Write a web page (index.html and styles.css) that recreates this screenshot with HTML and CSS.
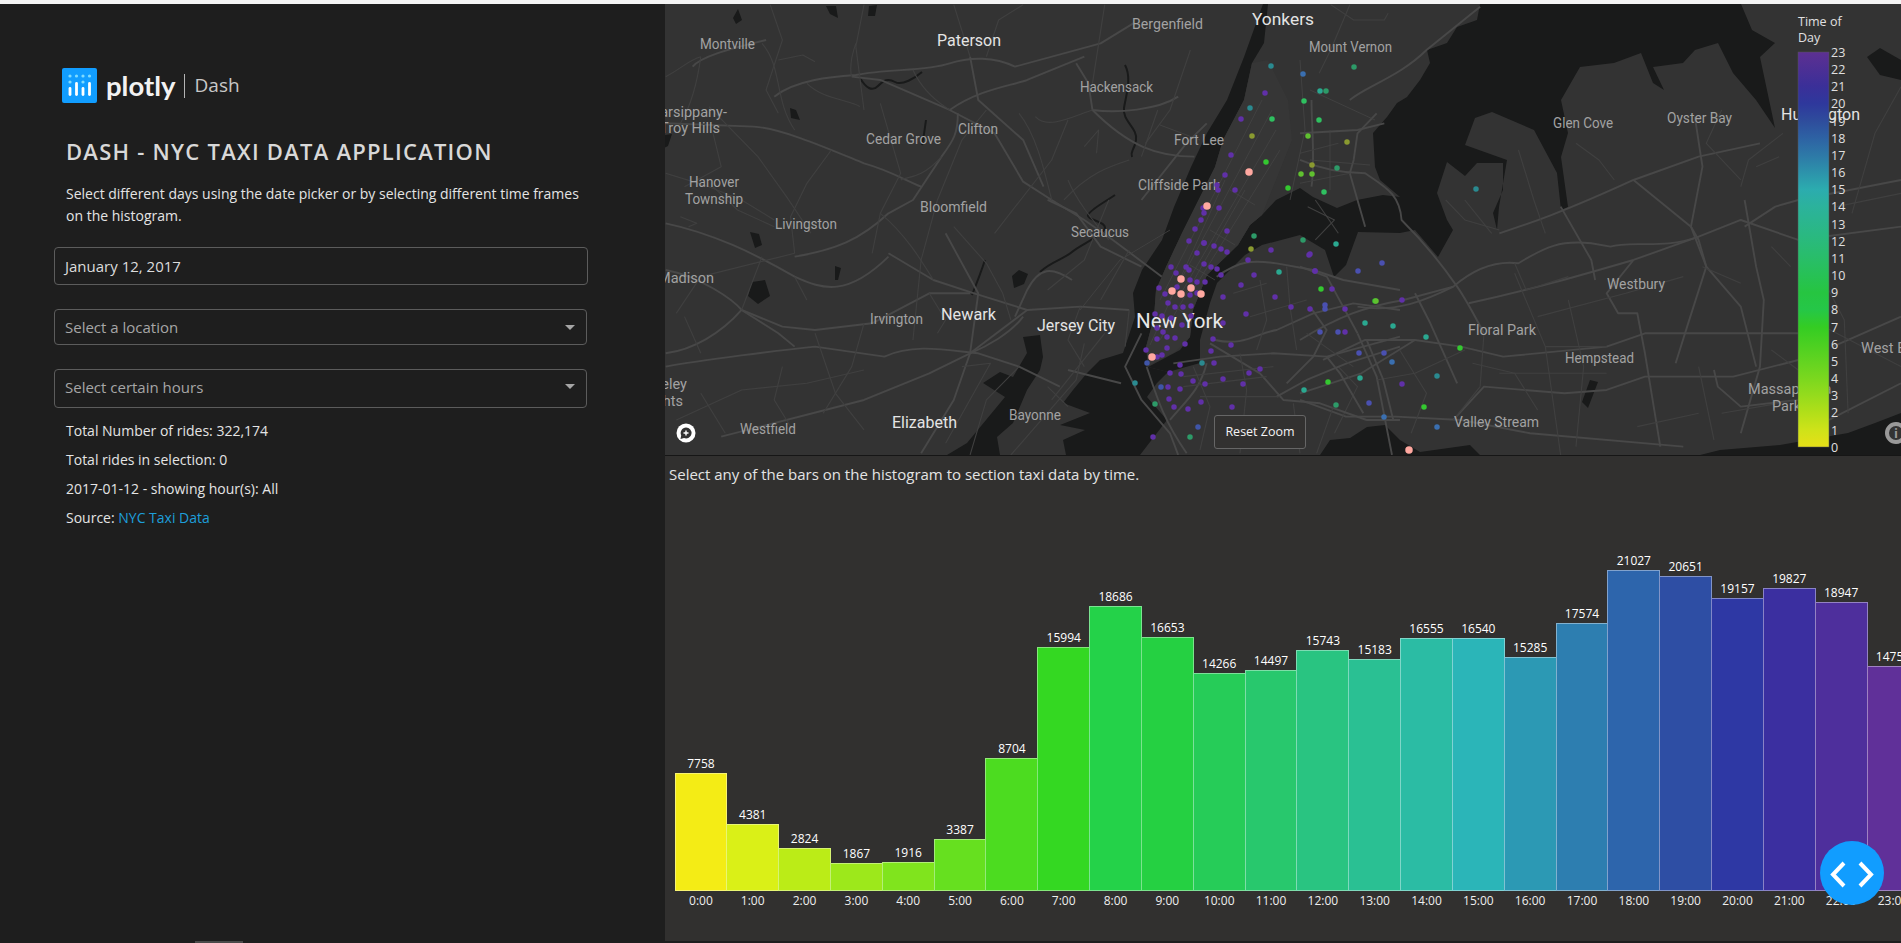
FILE: index.html
```html
<!DOCTYPE html>
<html lang="en">

<head>
    <meta charset="UTF-8">
    <title>Dash - NYC Taxi Data Application</title>
    <link rel="stylesheet" href="styles.css">
</head>

<body>
    <div class="app">
        <!-- left column -->
        <div class="sidebar">
            <div class="logo">
                <svg class="logo-mark" width="35" height="35" viewBox="0 0 35 35">
                    <rect width="35" height="35" rx="2" fill="#119dff" />
                    <g fill="#7fdbff">
                        <circle cx="8" cy="8" r="1.6" />
                        <circle cx="14.5" cy="8" r="1.6" />
                        <circle cx="21" cy="8" r="1.6" />
                        <circle cx="27.5" cy="8" r="1.6" />
                        <circle cx="8" cy="14" r="1.6" />
                        <circle cx="21" cy="14" r="1.6" />
                    </g>
                    <g fill="#fff">
                        <rect x="6.6" y="19" width="2.8" height="9" rx="1.4" />
                        <rect x="13.1" y="14" width="2.8" height="14" rx="1.4" />
                        <rect x="19.6" y="19" width="2.8" height="9" rx="1.4" />
                        <rect x="26.1" y="14" width="2.8" height="14" rx="1.4" />
                    </g>
                </svg>
                <span class="logo-word">plotly</span>
                <span class="logo-sep"></span>
                <span class="logo-dash">Dash</span>
            </div>

            <h2 class="title">DASH - NYC TAXI DATA APPLICATION</h2>
            <p class="intro">Select different days using the date picker or by selecting different time frames on the histogram.</p>

            <div class="date-input">January 12, 2017</div>
            <div class="dropdown dropdown-location"><span>Select a location</span><i class="caret"></i></div>
            <div class="dropdown dropdown-hours"><span>Select certain hours</span><i class="caret"></i></div>

            <div class="stats">
                <p>Total Number of rides: 322,174</p>
                <p>Total rides in selection: 0</p>
                <p>2017-01-12 - showing hour(s): All</p>
                <p>Source: <a href="#">NYC Taxi Data</a></p>
            </div>
        </div>

        <!-- right column -->
        <div class="content">
            <div class="map">
                <svg class="map-svg" viewBox="665 4 1236 451" width="1236" height="451">
                    <defs>
                        <linearGradient id="timeScale" x1="0" y1="1" x2="0" y2="0">
                            <stop offset="0" stop-color="#F4EC15" />
                            <stop offset=".0435" stop-color="#DAF017" />
                            <stop offset=".087" stop-color="#BBEC17" />
                            <stop offset=".13" stop-color="#9DE81B" />
                            <stop offset=".174" stop-color="#80E41D" />
                            <stop offset=".217" stop-color="#66E01F" />
                            <stop offset=".261" stop-color="#4CDC20" />
                            <stop offset=".304" stop-color="#34D822" />
                            <stop offset=".348" stop-color="#24D249" />
                            <stop offset=".391" stop-color="#25D042" />
                            <stop offset=".435" stop-color="#26CC58" />
                            <stop offset=".478" stop-color="#28C86D" />
                            <stop offset=".522" stop-color="#29C481" />
                            <stop offset=".565" stop-color="#2AC093" />
                            <stop offset=".609" stop-color="#2BBCA4" />
                            <stop offset=".652" stop-color="#2BB5B8" />
                            <stop offset=".696" stop-color="#2C99B4" />
                            <stop offset=".739" stop-color="#2D7EB0" />
                            <stop offset=".783" stop-color="#2D65AC" />
                            <stop offset=".826" stop-color="#2E4EA4" />
                            <stop offset=".87" stop-color="#2E38A4" />
                            <stop offset=".913" stop-color="#3B2FA0" />
                            <stop offset=".957" stop-color="#4E2F9C" />
                            <stop offset="1" stop-color="#603099" />
                        </linearGradient>
                    </defs>

                    <rect x="665" y="4" width="1236" height="451" fill="#333" />

                    <!-- water -->
                    <g class="water">
                        <polygon points="1263,4 1244,57 1227,100 1207,133 1191,167 1174,207 1162,240 1142,270 1133,293 1135,317 1123,353 1100,360 1087,373 1073,390 1063,403 1090,413 1060,425 1085,430 1063,440 1066,455 1140,455 1167,420 1147,397 1157,383 1168,372 1148,367 1146,347 1154,317 1156,290 1166,267 1182,233 1195,207 1215,167 1223,140 1244,100 1252,63 1264,43 1268,4" />
                        <polygon points="1480,4 1477,20 1457,27 1447,43 1427,50 1430,63 1420,80 1407,97 1397,103 1387,117 1373,133 1375,167 1380,180 1400,197 1383,195 1357,200 1337,208 1313,197 1300,188 1276,200 1262,215 1250,225 1238,245 1207,275 1193,310 1190,337 1180,350 1148,367 1168,372 1200,363 1200,340 1210,303 1217,283 1245,255 1262,245 1300,235 1325,250 1334,277 1346,265 1358,232 1400,233 1415,230 1438,257 1453,230 1447,220 1437,193 1447,162 1465,176 1477,163 1503,163 1503,190 1493,213 1497,230 1499,207 1507,160 1465,145 1475,118 1492,112 1534,130 1557,173 1561,210 1568,207 1561,157 1568,133 1561,100 1580,67 1614,63 1641,53 1653,83 1664,90 1653,67 1683,63 1695,50 1718,43 1733,73 1756,100 1775,128 1760,57 1775,43 1752,30 1741,4" />
                        <polygon points="1023,337 1027,353 1013,377 1000,372 983,383 1005,397 967,443 947,455 1000,455 997,437 1013,423 1027,390 1040,370 1043,357 1040,335" />
                        <polygon points="1320,455 1330,440 1350,438 1367,427 1385,425 1400,440 1420,452 1470,445 1480,455" />
                        <polygon points="1700,455 1720,450 1780,445 1848,433 1875,423 1901,413 1901,455" />
                        <polygon points="1867,57 1880,48 1901,60 1901,80 1880,75" />
                        <polygon points="1012,276 1019,270 1028,274 1024,284 1014,288" />
                        <polygon points="733,18 738,9 742,20 736,24" />
                        <polygon points="869,6 877,5 875,16 868,16" />
                        <polygon points="826,6 836,6 838,18 830,14" />
                        <polygon points="790,108 796,110 800,120 791,118" />
                        <polygon points="750,232 759,234 762,245 755,248" />
                        <polygon points="752,282 765,280 770,296 758,304 748,296" />
                        <polygon points="835,266 841,268 838,280 835,280" />
                        <polygon points="664,135 672,134 668,146 664,148" />
                        <polygon points="1590,380 1598,382 1588,408 1582,402" />
                    </g>
                    <g class="river">
                        <path d="M860 78 C866 88 872 92 878 86 S888 78 895 82 S915 78 922 72" />
                        <path d="M922 145 C924 135 925 128 926 120" />
                        <path d="M1125 65 C1132 78 1126 95 1124 108 S1138 128 1136 140 S1130 150 1132 157" />
                        <path d="M1115 195 C1100 205 1090 210 1088 215 S1110 222 1104 230 S1080 245 1072 252 S1050 262 1040 272" />
                        <path d="M985 260 C980 275 976 285 972 295" />
                    </g>

                    <!-- roads west of Manhattan, traced on a 2.45 x 3 grid -->
                    <g transform="translate(660 0) scale(.408 .3333)">
                        <g class="road">
                            <path d="M14 370 L230 380 C300 385 420 450 500 490 C560 510 600 540 640 560" />
                            <path d="M80 200 C100 170 160 150 260 120" />
                            <path d="M280 290 C330 240 420 230 480 225 C560 205 650 215 710 190 C760 170 820 170 870 200 L1080 130 L1160 70" />
                            <path d="M710 330 C780 270 850 260 900 240 L1040 170" />
                            <path d="M760 170 L780 300 L890 420 L940 560" />
                            <path d="M470 230 L540 240 L710 330 L820 400 L890 545 L960 600 L1040 660 L1110 720 L1230 830" />
                            <path d="M14 670 C130 700 230 760 330 830 C400 870 460 890 560 770" />
                            <path d="M330 770 C430 750 490 720 560 640 L620 600 L690 470 C720 420 730 400 730 340" />
                            <path d="M560 760 L670 840 L770 880 L900 930 L1030 920 L1150 930" />
                            <path d="M200 930 L290 1000 L330 1040" />
                            <path d="M14 1100 C100 1080 300 1050 380 1040 L550 1070 C620 1030 700 1050 780 1060 L880 1100 L980 1160" />
                            <path d="M760 1060 L900 930" />
                            <path d="M890 950 C860 1000 800 1040 760 1060 L660 1120 L500 1200 L150 1310" />
                            <path d="M1010 840 C960 800 930 800 900 870 L870 950" />
                            <path d="M200 930 L300 980 L380 990 L520 970 L660 880 L760 880" />
                            <path d="M14 810 C100 830 180 900 200 930 C150 1000 80 1050 14 1060" />
                            <path d="M1270 290 C1220 330 1120 340 1060 330 L1050 250 L1020 190" />
                            <path d="M1060 330 C1150 440 1220 470 1310 470" />
                            <path d="M1180 600 L1290 430 L1340 370" />
                            <path d="M1180 800 L1080 740 L1020 640 L950 600" />
                            <path d="M700 700 L780 880 L760 1060 L720 1200 L640 1360" />
                            <path d="M1180 1000 L1140 1100 L1180 1200 L1250 1300 L1270 1365" />
                            <path d="M1000 1110 L1130 1150" />
                        </g>
                        <g class="road-minor">
                            <path d="M270 14 L300 120 L260 270 L290 340" />
                            <path d="M500 14 L480 140 L500 330" />
                            <path d="M720 14 L760 170" />
                            <path d="M890 14 L830 60 L800 170" />
                            <path d="M1090 14 L1060 250" />
                            <path d="M1300 150 L1250 330 L1190 430" />
                            <path d="M120 320 L240 470 L310 590 L370 700" />
                            <path d="M540 310 L590 520 L540 640 L520 760" />
                            <path d="M800 330 L740 420 L680 600 L640 780 L620 1020" />
                            <path d="M1000 360 L960 480 L820 700" />
                            <path d="M14 520 L120 560 L200 600 L280 660" />
                            <path d="M100 830 L330 760 L320 650 L360 550 L420 450" />
                            <path d="M380 1000 L430 1180 L500 1290" />
                            <path d="M40 1260 L200 1170 L360 1150 L500 1110" />
                            <path d="M860 960 L840 880 L800 790 L720 680" />
                            <path d="M1100 600 L1040 780 L950 870" />
                            <path d="M1150 750 L1080 900" />
                            <path d="M1040 1030 L1020 1140 L860 1365" />
                            <path d="M1090 1000 L960 1200" />
                            <path d="M740 1100 L810 1090 L700 1330" />
                            <path d="M50 650 L90 670 L70 680" />
                            <path d="M1040 440 L1075 390 L1070 460" />
                            <path d="M290 180 L350 165 L380 185" />
                            <path d="M130 400 L150 500 L60 560" />
                            <path d="M14 230 C60 200 70 180 100 170" />
                            <path d="M100 170 C90 260 70 330 50 370" />
                            <path d="M250 130 C300 200 280 300 330 390" />
                            <path d="M360 250 C400 300 470 300 490 320" />
                            <path d="M480 130 C460 200 470 230 470 230" />
                            <path d="M620 210 C650 290 700 320 710 330" />
                            <path d="M690 470 C640 540 600 530 590 540" />
                            <path d="M960 600 C940 500 920 400 880 340" />
                            <path d="M1060 330 C1010 350 950 390 920 350" />
                            <path d="M1150 480 C1100 500 1050 520 990 600" />
                            <path d="M1220 330 L1180 470" />
                            <path d="M1000 540 C1020 600 1060 660 1100 720" />
                            <path d="M540 640 C600 700 640 780 670 840" />
                            <path d="M250 770 L200 930" />
                            <path d="M130 560 L190 630 L280 680" />
                            <path d="M330 830 L360 900" />
                            <path d="M100 830 L40 940" />
                            <path d="M500 970 L470 1100 L400 1240" />
                            <path d="M660 880 L700 960 L680 1000" />
                            <path d="M880 1100 L800 1200 L760 1365" />
                            <path d="M950 1160 L1000 1220" />
                            <path d="M1030 920 L1000 1020 L1040 1100" />
                            <path d="M1150 930 L1140 1040" />
                            <path d="M300 1100 L280 1200 L330 1300" />
                            <path d="M100 1180 L160 1300" />
                            <path d="M60 950 L100 1060" />
                        </g>
                    </g>

                    <!-- roads east of Manhattan, traced on a 2.609 x 3 grid -->
                    <g transform="translate(1300 0) scale(.3833 .3333)">
                        <g class="road">
                            <path d="M0 480 C60 510 120 520 170 520 C220 560 260 580 265 660 C300 700 350 760 410 860 C440 910 470 980 480 1000" />
                            <path d="M30 300 C30 380 40 480 30 560" />
                            <path d="M200 340 L150 400 L140 480 L130 520 L150 600 L170 680" />
                            <path d="M130 300 C170 260 260 230 330 150 L470 20" />
                            <path d="M0 400 L150 390 L220 370" />
                            <path d="M270 900 L400 860 C440 820 500 780 570 790 C640 740 680 720 760 730 L810 740 C860 720 950 750 1040 710 L1150 660 L1300 720" />
                            <path d="M150 920 C250 940 330 900 400 860" />
                            <path d="M0 1020 C100 950 170 920 270 900" />
                            <path d="M520 700 C600 670 680 640 870 540 L1040 470 L1200 430" />
                            <path d="M870 540 L1020 680 L1060 800 L1150 920 L1190 1100" />
                            <path d="M440 910 C600 870 720 830 870 780 L1040 710" />
                            <path d="M300 880 L340 970 L410 1150" />
                            <path d="M1300 1000 H900 L800 1040 L530 1070 L420 1040 L300 1020 L170 1020 L60 1080" />
                            <path d="M1030 350 L1050 500 L1020 680 L1040 720 L1060 800 L1010 980 L980 1090" />
                            <path d="M1160 600 L1190 800 L1210 900 L1200 1100 L1150 1300" />
                            <path d="M1000 1340 L600 1300 L420 1260 L250 1250 L120 1250 L0 1200" />
                            <path d="M400 1260 L480 1160 L690 1180 L800 1170 L900 1130 L1130 1130 L1300 1080" />
                            <path d="M870 780 L800 880 L830 940 L880 940 L900 1060 L940 1340" />
                            <path d="M1080 1110 L1090 1160 L1150 1220 L1300 1200" />
                            <path d="M1160 680 L1240 620 L1300 600 L1568 540" />
                            <path d="M1300 720 L1568 680" />
                            <path d="M1390 1040 L1568 950" />
                            <path d="M1380 1260 L1568 1150" />
                            <path d="M150 1000 L200 1130 L240 1365" />
                            <path d="M0 800 L70 830 L150 1000" />
                            <path d="M680 620 L760 780 L770 840" />
                            <path d="M0 1180 L160 1120 L300 1020" />
                        </g>
                        <g class="road-minor">
                            <path d="M80 14 L140 60 L220 60 L230 40" />
                            <path d="M50 220 L80 150 L130 14" />
                            <path d="M570 450 L610 600 L640 700" />
                            <path d="M720 430 L780 480 L820 540" />
                            <path d="M1100 330 L1060 430 L1150 540" />
                            <path d="M1260 400 L1170 480 L1150 560" />
                            <path d="M700 900 L740 1100 L720 1340" />
                            <path d="M560 820 L640 1040 L680 1365" />
                            <path d="M620 950 L850 880 L1000 830" />
                            <path d="M1230 740 L1280 800" />
                            <path d="M1330 760 L1420 960 L1430 1240" />
                            <path d="M1440 640 L1500 400 L1568 260" />
                            <path d="M380 600 L430 660 L520 690" />
                            <path d="M20 620 L90 660 L40 720" />
                            <path d="M1040 1100 L1080 1320" />
                            <path d="M450 1090 L560 1120 L620 1230" />
                            <path d="M100 1100 L150 1160 L90 1300" />
                            <path d="M260 1050 L330 1180 L290 1300" />
                            <path d="M200 1140 L300 1120 L430 1050" />
                            <path d="M480 1000 L470 1160" />
                            <path d="M100 430 L0 460" />
                            <path d="M130 520 L0 550" />
                            <path d="M40 600 L100 700" />
                            <path d="M430 600 L500 700" />
                            <path d="M560 790 L590 870 L700 830" />
                            <path d="M640 1040 L800 1040" />
                            <path d="M1050 800 L1150 850" />
                            <path d="M1230 1050 L1300 1110" />
                            <path d="M1190 500 L1250 470" />
                            <path d="M1400 620 L1568 580" />
                            <path d="M1300 940 L1400 1000 L1568 1100" />
                            <path d="M470 1160 L400 1260" />
                            <path d="M520 1120 L800 1120" />
                            <path d="M880 1280 L1040 1240" />
                            <path d="M1100 1240 L1300 1200" />
                        </g>
                    </g>

                    <!-- Manhattan and the streets around it -->
                    <polygon class="manhattan" points="1268,60 1252,63 1244,100 1223,140 1215,167 1195,207 1182,233 1166,267 1156,290 1154,317 1146,347 1150,365 1175,352 1190,337 1193,310 1207,275 1238,245 1250,225 1262,215 1276,180 1292,140 1288,100" />
                    <g class="street">
                        <path d="M1160 300 L1262 100 M1170 300 L1272 110 M1180 295 L1276 130 M1190 295 L1280 150 M1160 340 L1245 190 M1150 345 L1225 180 M1230 190 L1255 205 M1210 230 L1235 245 M1190 265 L1215 280 M1172 305 L1195 320" />
                        <path d="M1170 230 L1120 260 L1080 310 M1200 140 L1160 125 M1300 60 L1305 130 L1290 200 M1330 130 L1330 190 M1310 160 L1370 165 M1310 90 L1375 120" />
                    </g>

                    <!-- Brooklyn and Queens, traced on the 3x crop -->
                    <g transform="translate(1100 240) scale(.3333)">
                        <g class="road">
                            <path d="M350 110 C420 60 460 60 530 70 L640 90 L730 120 L900 150" />
                            <path d="M345 300 C430 320 470 280 530 270 L640 220 L760 190 L900 210" />
                            <path d="M330 310 L480 400 L550 480 L660 490 L800 540 L900 540" />
                            <path d="M680 350 L720 400 L790 520" />
                            <path d="M530 470 L620 420 L740 370 L900 320" />
                            <path d="M220 370 L360 350 L520 340 L680 350 L900 290" />
                            <path d="M140 380 C170 470 190 540 260 640" />
                            <path d="M210 540 C260 480 300 450 320 370" />
                            <path d="M560 430 L590 400 L640 350 L680 270 L630 200" />
                            <path d="M800 300 L850 420 L880 540" />
                        </g>
                        <g class="road-minor">
                            <path d="M250 410 L520 380 M250 440 L500 410 M300 470 L540 470" />
                            <path d="M280 380 L330 500 L300 630" />
                            <path d="M420 340 L440 450 L420 640" />
                            <path d="M580 490 L600 640 M700 500 L650 640" />
                            <path d="M480 120 L500 240 L470 330" />
                            <path d="M560 80 L570 200 L590 330" />
                            <path d="M620 280 L760 380" />
                            <path d="M400 160 L500 130 M450 230 L620 180" />
                        </g>
                    </g>

                    <!-- map labels -->
                    <g class="label">
                        <text x="700" y="49" textLength="55" lengthAdjust="spacingAndGlyphs">Montville</text>
                        <text x="1132" y="29" textLength="71" lengthAdjust="spacingAndGlyphs">Bergenfield</text>
                        <text x="1309" y="52" textLength="83" lengthAdjust="spacingAndGlyphs">Mount Vernon</text>
                        <text x="1080" y="92" textLength="73" lengthAdjust="spacingAndGlyphs">Hackensack</text>
                        <text x="727" y="117" text-anchor="end">Parsippany-</text>
                        <text x="720" y="133" text-anchor="end">Troy Hills</text>
                        <text x="866" y="144" textLength="75" lengthAdjust="spacingAndGlyphs">Cedar Grove</text>
                        <text x="958" y="134" textLength="40" lengthAdjust="spacingAndGlyphs">Clifton</text>
                        <text x="1174" y="145" textLength="50" lengthAdjust="spacingAndGlyphs">Fort Lee</text>
                        <text x="689" y="187" textLength="50" lengthAdjust="spacingAndGlyphs">Hanover</text>
                        <text x="685" y="204" textLength="58" lengthAdjust="spacingAndGlyphs">Township</text>
                        <text x="1138" y="190" textLength="82" lengthAdjust="spacingAndGlyphs">Cliffside Park</text>
                        <text x="920" y="212" textLength="67" lengthAdjust="spacingAndGlyphs">Bloomfield</text>
                        <text x="775" y="229" textLength="62" lengthAdjust="spacingAndGlyphs">Livingston</text>
                        <text x="1071" y="237" textLength="58" lengthAdjust="spacingAndGlyphs">Secaucus</text>
                        <text x="714" y="283" text-anchor="end">Madison</text>
                        <text x="870" y="324" textLength="53" lengthAdjust="spacingAndGlyphs">Irvington</text>
                        <text x="687" y="389" text-anchor="end">Berkeley</text>
                        <text x="683" y="406" text-anchor="end">Heights</text>
                        <text x="1009" y="420" textLength="52" lengthAdjust="spacingAndGlyphs">Bayonne</text>
                        <text x="740" y="434" textLength="56" lengthAdjust="spacingAndGlyphs">Westfield</text>
                        <text x="1553" y="128" textLength="60" lengthAdjust="spacingAndGlyphs">Glen Cove</text>
                        <text x="1667" y="123" textLength="65" lengthAdjust="spacingAndGlyphs">Oyster Bay</text>
                        <text x="1607" y="289" textLength="58" lengthAdjust="spacingAndGlyphs">Westbury</text>
                        <text x="1468" y="335" textLength="68" lengthAdjust="spacingAndGlyphs">Floral Park</text>
                        <text x="1565" y="363" textLength="69" lengthAdjust="spacingAndGlyphs">Hempstead</text>
                        <text x="1454" y="427" textLength="85" lengthAdjust="spacingAndGlyphs">Valley Stream</text>
                        <text x="1748" y="394">Massapequa</text>
                        <text x="1772" y="411">Park</text>
                        <text x="1861" y="353">West Babylon</text>
                    </g>
                    <g class="label label-big">
                        <text x="937" y="46" textLength="64" lengthAdjust="spacingAndGlyphs">Paterson</text>
                        <text x="1252" y="25" textLength="62" lengthAdjust="spacingAndGlyphs">Yonkers</text>
                        <text x="941" y="320" textLength="55" lengthAdjust="spacingAndGlyphs">Newark</text>
                        <text x="1037" y="331" textLength="78" lengthAdjust="spacingAndGlyphs">Jersey City</text>
                        <text x="892" y="428" textLength="65" lengthAdjust="spacingAndGlyphs">Elizabeth</text>
                        <text x="1781" y="120" textLength="79" lengthAdjust="spacingAndGlyphs">Huntington</text>
                        <text class="label-city" x="1136" y="328" textLength="87" lengthAdjust="spacingAndGlyphs">New York</text>
                    </g>

                    <!-- taxi pickups: 0 length round-capped segments -->
                    <g class="dots dots-purple">
                        <path d="M1197 253h0M1186 267h0M1204 243h0M1214 246h0M1221 249h0M1227 252h0M1171 267h0M1176 273h0M1189 270h0M1204 264h0M1211 267h0M1217 269h0M1221 275h0M1254 275h0M1248 260h0M1271 250h0M1309 255h0M1315 271h0M1241 285h0M1159 288h0M1165 294h0M1168 303h0M1175 307h0M1183 307h0M1191 306h0M1177 287h0M1190 280h0M1197 282h0M1205 282h0M1197 293h0M1190 295h0M1223 297h0M1275 297h0M1291 307h0M1155 314h0M1162 316h0M1171 318h0M1182 325h0M1191 316h0M1223 323h0M1246 314h0M1157 328h0M1163 332h0M1167 337h0M1175 338h0M1157 339h0M1185 344h0M1167 348h0M1213 339h0M1231 345h0M1211 351h0M1146 350h0M1162 355h0M1157 357h0M1214 363h0M1180 365h0M1170 373h0M1181 374h0M1193 381h0M1205 384h0M1223 379h0M1243 384h0M1249 373h0M1260 369h0M1168 387h0M1180 389h0M1169 399h0M1174 407h0M1188 409h0M1201 402h0M1232 407h0M1153 437h0" />
                        <path d="M1265 93h0M1241 119h0M1231 155h0M1225 175h0M1217 185h0M1218 190h0M1235 190h0M1203 208h0M1219 208h0M1204 213h0M1201 220h0M1195 229h0M1227 231h0M1189 241h0M1204 243h0" />
                        <path d="M1310 254h0M1315 271h0M1332 289h0M1345 309h0M1310 309h0M1345 332h0M1402 384h0M1402 300h0" />
                    </g>
                    <g class="dots">
                        <path stroke="#3f55a8" d="M1147 363h0M1161 387h0M1198 427h0" />
                        <path stroke="#4a50b0" d="M1358 271h0M1382 263h0M1325 309h0M1325 305h0M1320 332h0M1338 332h0M1359 353h0M1384 353h0M1369 403h0" />
                        <path stroke="#3a6fb0" d="M1392 362h0M1384 417h0M1437 427h0M1303 74h0" />
                        <path stroke="#2a8a90" d="M1271 66h0M1250 108h0M1202 363h0M1135 383h0M1437 376h0M1476 189h0" />
                        <path stroke="#2aa890" d="M1279 272h0M1304 390h0M1336 244h0M1320 91h0M1365 323h0M1393 326h0M1426 337h0M1360 378h0" />
                        <path stroke="#2d9a68" d="M1303 240h0M1354 67h0M1326 91h0M1337 168h0M1254 236h0M1336 405h0M1155 404h0M1190 437h0" />
                        <path stroke="#2fc060" d="M1304 101h0M1319 120h0M1324 192h0M1272 119h0" />
                        <path stroke="#34c830" d="M1321 289h0M1460 348h0M1328 382h0M1424 407h0M1375 301h0M1266 162h0M1288 188h0" />
                        <path stroke="#60c030" d="M1301 174h0M1376 301h0M1308 136h0M1312 174h0" />
                        <path stroke="#8a9a30" d="M1347 142h0M1312 165h0M1252 136h0M1251 249h0" />
                    </g>
                    <g class="dots dots-pink">
                        <path d="M1181 279h0M1191 288h0M1172 291h0M1181 294h0M1201 294h0M1152 357h0M1249 172h0M1207 206h0M1409 450h0" />
                    </g>

                    <!-- colour bar -->
                    <rect x="1798" y="52" width="31" height="395" fill="#333" />
                    <rect x="1798" y="52" width="31" height="395" fill="url(#timeScale)" fill-opacity=".93" stroke="#555" stroke-width=".5" />
                    <g class="ticks">
                        <text x="1798" y="26">Time of</text>
                        <text x="1798" y="42">Day</text>
                        <text x="1831" y="57">23</text>
                        <text x="1831" y="74">22</text>
                        <text x="1831" y="91">21</text>
                        <text x="1831" y="108">20</text>
                        <text x="1831" y="126">19</text>
                        <text x="1831" y="143">18</text>
                        <text x="1831" y="160">17</text>
                        <text x="1831" y="177">16</text>
                        <text x="1831" y="194">15</text>
                        <text x="1831" y="211">14</text>
                        <text x="1831" y="229">13</text>
                        <text x="1831" y="246">12</text>
                        <text x="1831" y="263">11</text>
                        <text x="1831" y="280">10</text>
                        <text x="1831" y="297">9</text>
                        <text x="1831" y="314">8</text>
                        <text x="1831" y="332">7</text>
                        <text x="1831" y="349">6</text>
                        <text x="1831" y="366">5</text>
                        <text x="1831" y="383">4</text>
                        <text x="1831" y="400">3</text>
                        <text x="1831" y="417">2</text>
                        <text x="1831" y="435">1</text>
                        <text x="1831" y="452">0</text>
                    </g>

                    <!-- mapbox marks -->
                    <circle cx="686" cy="433" r="9.5" fill="#fff" />
                    <path d="M686 427.5 a5.5 5.5 0 1 1 -2 10.6 L680.5 439 L681.2 435.4 A5.5 5.5 0 0 1 686 427.5z" fill="#333" />
                    <path d="M686 430.5v5M683.5 433h5" stroke="#fff" stroke-width="1.4" />
                    <circle cx="1896" cy="433" r="9" fill="#333" stroke="#999" stroke-width="4" />
                    <text class="attrib" x="1896" y="438" text-anchor="middle">i</text>
                </svg>
                <div class="reset-zoom">Reset Zoom</div>
            </div>

            <div class="chart-panel">
                <p class="chart-note">Select any of the bars on the histogram to section taxi data by time.</p>
                <div class="histogram">
                    <div class="col"><span class="val">7758</span><div class="bar" style="height:118.5px;background:#F4EC15"></div><span class="tick">0:00</span></div>
                    <div class="col"><span class="val">4381</span><div class="bar" style="height:66.9px;background:#DAF017"></div><span class="tick">1:00</span></div>
                    <div class="col"><span class="val">2824</span><div class="bar" style="height:43.2px;background:#BBEC17"></div><span class="tick">2:00</span></div>
                    <div class="col"><span class="val">1867</span><div class="bar" style="height:28.5px;background:#9DE81B"></div><span class="tick">3:00</span></div>
                    <div class="col"><span class="val">1916</span><div class="bar" style="height:29.3px;background:#80E41D"></div><span class="tick">4:00</span></div>
                    <div class="col"><span class="val">3387</span><div class="bar" style="height:51.8px;background:#66E01F"></div><span class="tick">5:00</span></div>
                    <div class="col"><span class="val">8704</span><div class="bar" style="height:133px;background:#4CDC20"></div><span class="tick">6:00</span></div>
                    <div class="col"><span class="val">15994</span><div class="bar" style="height:244.4px;background:#34D822"></div><span class="tick">7:00</span></div>
                    <div class="col"><span class="val">18686</span><div class="bar" style="height:285.5px;background:#24D249"></div><span class="tick">8:00</span></div>
                    <div class="col"><span class="val">16653</span><div class="bar" style="height:254.5px;background:#25D042"></div><span class="tick">9:00</span></div>
                    <div class="col"><span class="val">14266</span><div class="bar" style="height:218px;background:#26CC58"></div><span class="tick">10:00</span></div>
                    <div class="col"><span class="val">14497</span><div class="bar" style="height:221.5px;background:#28C86D"></div><span class="tick">11:00</span></div>
                    <div class="col"><span class="val">15743</span><div class="bar" style="height:240.6px;background:#29C481"></div><span class="tick">12:00</span></div>
                    <div class="col"><span class="val">15183</span><div class="bar" style="height:232px;background:#2AC093"></div><span class="tick">13:00</span></div>
                    <div class="col"><span class="val">16555</span><div class="bar" style="height:253px;background:#2BBCA4"></div><span class="tick">14:00</span></div>
                    <div class="col"><span class="val">16540</span><div class="bar" style="height:252.7px;background:#2BB5B8"></div><span class="tick">15:00</span></div>
                    <div class="col"><span class="val">15285</span><div class="bar" style="height:233.6px;background:#2C99B4"></div><span class="tick">16:00</span></div>
                    <div class="col"><span class="val">17574</span><div class="bar" style="height:268.5px;background:#2D7EB0"></div><span class="tick">17:00</span></div>
                    <div class="col"><span class="val">21027</span><div class="bar" style="height:321.3px;background:#2D65AC"></div><span class="tick">18:00</span></div>
                    <div class="col"><span class="val">20651</span><div class="bar" style="height:315.5px;background:#2E4EA4"></div><span class="tick">19:00</span></div>
                    <div class="col"><span class="val">19157</span><div class="bar" style="height:292.7px;background:#2E38A4"></div><span class="tick">20:00</span></div>
                    <div class="col"><span class="val">19827</span><div class="bar" style="height:303px;background:#3B2FA0"></div><span class="tick">21:00</span></div>
                    <div class="col"><span class="val">18947</span><div class="bar" style="height:289.5px;background:#4E2F9C"></div><span class="tick">22:00</span></div>
                    <div class="col"><span class="val">14758</span><div class="bar" style="height:225.5px;background:#603099"></div><span class="tick">23:00</span></div>
                </div>
            </div>
        </div>
    </div>

    <!-- floating debug button -->
    <div class="dev-button">
        <svg width="64" height="64" viewBox="0 0 64 64">
            <path d="M24 22 L13 33.500 L24 45 M40 22 L51 33.500 L40 45" />
        </svg>
    </div>
    <div class="scroll-thumb"></div>
</body>

</html>
```

FILE: styles.css
```css
html,
body {
    margin: 0;
    height: 100%;
    overflow: hidden;
}

body {
    background-color: #1e1e1e;
    border-top: 4px solid #f4f4f4;
    box-sizing: border-box;
    font-family: "Open Sans", sans-serif;
    color: #e4e4e4;
}

.app {
    display: flex;
    height: 937px;
}

/* left column */
.sidebar {
    flex: 0 0 665px;
    box-sizing: border-box;
    padding: 64px 0 0 54px;
}

.logo {
    display: flex;
    align-items: center;
    height: 35px;
    margin-left: 8px;
}

.logo-mark {
    display: block;
}

.logo-word {
    margin-left: 9px;
    font-family: "Lato", sans-serif;
    font-size: 27.500px;
    font-weight: 700;
    line-height: 35px;
    color: #f2f2f2;
}

.logo-sep {
    width: 1px;
    height: 24px;
    margin-left: 8px;
    background: #b4b4b4;
}

.logo-dash {
    margin-left: 10px;
    font-size: 19px;
    line-height: 35px;
    color: #c8c8c8;
}

.title {
    margin: 34px 0 0 12px;
    font-size: 22px;
    font-weight: 600;
    line-height: 28px;
    letter-spacing: 1.250px;
    color: #d8d8d8;
}

.intro {
    width: 520px;
    margin: 18px 0 0 12px;
    font-size: 14px;
    line-height: 22px;
}

.date-input {
    width: 534px;
    height: 38px;
    margin-top: 20px;
    padding-left: 10px;
    box-sizing: border-box;
    border: 1px solid #5c5c5c;
    border-radius: 4px;
    font-size: 15px;
    line-height: 36px;
    color: #dcdcdc;
}

.dropdown {
    display: flex;
    align-items: center;
    justify-content: space-between;
    width: 533px;
    margin-top: 24px;
    padding: 0 11px 0 10px;
    box-sizing: border-box;
    border: 1px solid #5c5c5c;
    border-radius: 4px;
    font-size: 15px;
    color: #a6a6a6;
}

.dropdown-location {
    height: 36px;
}

.dropdown-hours {
    height: 38.500px;
    padding-bottom: 3px;
}

.caret {
    width: 0;
    height: 0;
    border-left: 5px solid transparent;
    border-right: 5px solid transparent;
    border-top: 5px solid #a6a6a6;
}

.stats {
    margin: 12px 0 0 12px;
    font-size: 14px;
    line-height: 22px;
}

.stats p {
    margin: 0 0 7.300px;
}

.stats a {
    color: #1d9fdb;
    text-decoration: none;
}

/* right column */
.content {
    flex: 1;
    min-width: 0;
    display: flex;
    flex-direction: column;
}

.map {
    position: relative;
    height: 451px;
    border-bottom: 1px solid #161616;
    overflow: hidden;
}

.map-svg {
    display: block;
}

.water polygon {
    fill: #191a1a;
}

.river path {
    fill: none;
    stroke: #191a1a;
    stroke-width: 2;
}

.road path,
.road-minor path {
    fill: none;
    stroke-linejoin: round;
    vector-effect: non-scaling-stroke;
}

.road path {
    stroke: #484848;
    stroke-width: 1.900;
}

.road-minor path {
    stroke: #404040;
    stroke-width: 1.100;
}

.manhattan {
    fill: #363636;
}

.street path {
    fill: none;
    stroke: #444;
    stroke-width: .8;
}

.label text {
    font-family: "Roboto", sans-serif;
    font-size: 14.500px;
    fill: #a2a2a2;
}

.label-big text {
    font-size: 16.500px;
    font-weight: 400;
    fill: #e4e4e4;
}

.label-big .label-city {
    font-size: 21px;
    font-weight: 400;
    fill: #e8e8e8;
}

.dots path {
    fill: none;
    stroke-width: 5.500;
    stroke-linecap: round;
}

.dots-purple path {
    stroke: #6030a8;
}

.dots-pink path {
    stroke: #ffa8a0;
    stroke-width: 7.500;
}

.ticks text {
    font-size: 12.500px;
    fill: #e0e0e0;
}

.attrib {
    font-size: 13px;
    font-weight: 700;
    fill: #999;
}

.reset-zoom {
    position: absolute;
    left: 549px;
    top: 411px;
    width: 92px;
    height: 34px;
    box-sizing: border-box;
    border: 1px solid #666;
    border-radius: 3px;
    background: #323130;
    font-size: 12.500px;
    line-height: 31px;
    text-align: center;
    color: #f4f4f4;
}

/* histogram */
.chart-panel {
    flex: 1;
    min-height: 0;
    display: flex;
    flex-direction: column;
    justify-content: space-between;
    background: #31302f;
    overflow: hidden;
}

.chart-note {
    margin: 8px 0 0 4px;
    font-size: 15px;
    line-height: 20px;
    color: #e4e4e4;
}

.histogram {
    display: flex;
    align-items: flex-end;
    padding: 0 0 31px 10px;
}

.col {
    flex: 0 0 51.830px;
    display: flex;
    flex-direction: column;
    text-align: center;
}

.val {
    padding-bottom: 1px;
    font-size: 12px;
    line-height: 16px;
    color: #fff;
}

.bar {
    margin: 0 -.5px;
    box-sizing: border-box;
    border: 1px solid rgba(255, 255, 255, .4);
}

.tick {
    font-size: 12px;
    line-height: 19px;
    color: #eee;
}

/* overlays */
.dev-button {
    position: absolute;
    left: 1820px;
    top: 841px;
    width: 64px;
    height: 64px;
    border-radius: 50%;
    background: #119dff;
}

.dev-button path {
    fill: none;
    stroke: #fff;
    stroke-width: 4;
}

.scroll-thumb {
    position: absolute;
    left: 195px;
    bottom: 0;
    width: 48px;
    height: 2px;
    background: #4a4a4a;
}
```
